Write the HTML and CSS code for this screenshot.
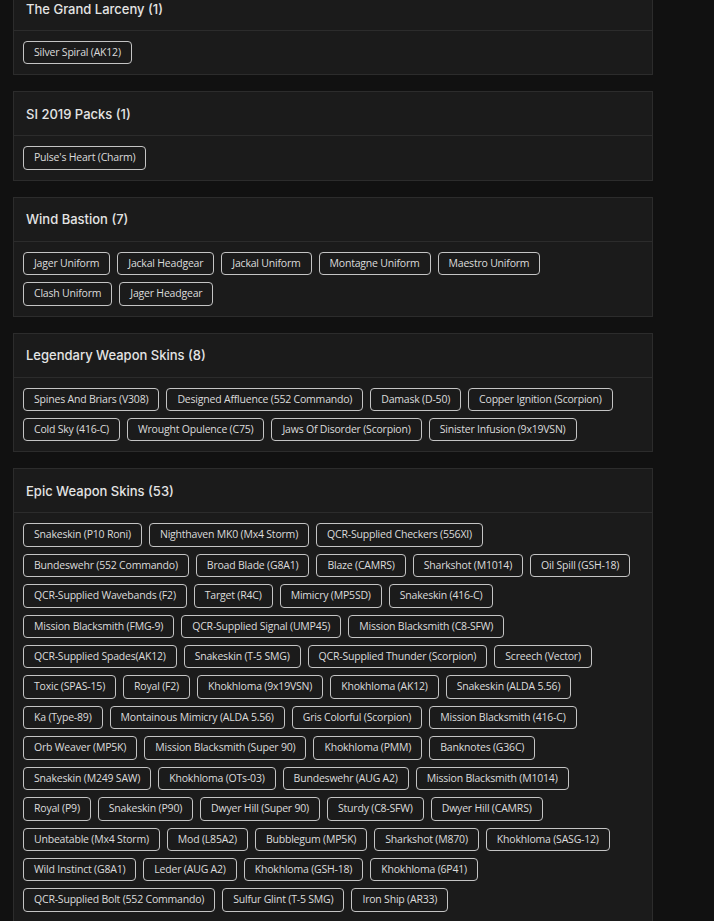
FILE: index.html
```html
<!DOCTYPE html>
<html lang="en">
<head>
<meta charset="utf-8">
<title>Skins</title>
<link rel="stylesheet" href="styles.css">
</head>
<body>
<main class="list">
  <section class="card">
    <h2 class="card-head">The Grand Larceny (1)</h2>
    <div class="card-body">
      <span class="tag">Silver Spiral (AK12)</span>
    </div>
  </section>
  <section class="card">
    <h2 class="card-head">SI 2019 Packs (1)</h2>
    <div class="card-body">
      <span class="tag">Pulse's Heart (Charm)</span>
    </div>
  </section>
  <section class="card">
    <h2 class="card-head">Wind Bastion (7)</h2>
    <div class="card-body">
      <span class="tag">Jager Uniform</span>
      <span class="tag">Jackal Headgear</span>
      <span class="tag">Jackal Uniform</span>
      <span class="tag">Montagne Uniform</span>
      <span class="tag">Maestro Uniform</span>
      <span class="tag">Clash Uniform</span>
      <span class="tag">Jager Headgear</span>
    </div>
  </section>
  <section class="card">
    <h2 class="card-head">Legendary Weapon Skins (8)</h2>
    <div class="card-body">
      <span class="tag">Spines And Briars (V308)</span>
      <span class="tag">Designed Affluence (552 Commando)</span>
      <span class="tag">Damask (D-50)</span>
      <span class="tag">Copper Ignition (Scorpion)</span>
      <span class="tag">Cold Sky (416-C)</span>
      <span class="tag">Wrought Opulence (C75)</span>
      <span class="tag">Jaws Of Disorder (Scorpion)</span>
      <span class="tag">Sinister Infusion (9x19VSN)</span>
    </div>
  </section>
  <section class="card">
    <h2 class="card-head">Epic Weapon Skins (53)</h2>
    <div class="card-body">
      <span class="tag">Snakeskin (P10 Roni)</span>
      <span class="tag">Nighthaven MK0 (Mx4 Storm)</span>
      <span class="tag">QCR-Supplied Checkers (556XI)</span>
      <span class="tag">Bundeswehr (552 Commando)</span>
      <span class="tag">Broad Blade (G8A1)</span>
      <span class="tag">Blaze (CAMRS)</span>
      <span class="tag">Sharkshot (M1014)</span>
      <span class="tag">Oil Spill (GSH-18)</span>
      <span class="tag">QCR-Supplied Wavebands (F2)</span>
      <span class="tag">Target (R4C)</span>
      <span class="tag">Mimicry (MP5SD)</span>
      <span class="tag">Snakeskin (416-C)</span>
      <span class="tag">Mission Blacksmith (FMG-9)</span>
      <span class="tag">QCR-Supplied Signal (UMP45)</span>
      <span class="tag">Mission Blacksmith (C8-SFW)</span>
      <span class="tag">QCR-Supplied Spades(AK12)</span>
      <span class="tag">Snakeskin (T-5 SMG)</span>
      <span class="tag">QCR-Supplied Thunder (Scorpion)</span>
      <span class="tag">Screech (Vector)</span>
      <span class="tag">Toxic (SPAS-15)</span>
      <span class="tag">Royal (F2)</span>
      <span class="tag">Khokhloma (9x19VSN)</span>
      <span class="tag">Khokhloma (AK12)</span>
      <span class="tag">Snakeskin (ALDA 5.56)</span>
      <span class="tag">Ka (Type-89)</span>
      <span class="tag">Montainous Mimicry (ALDA 5.56)</span>
      <span class="tag">Gris Colorful (Scorpion)</span>
      <span class="tag">Mission Blacksmith (416-C)</span>
      <span class="tag">Orb Weaver (MP5K)</span>
      <span class="tag">Mission Blacksmith (Super 90)</span>
      <span class="tag">Khokhloma (PMM)</span>
      <span class="tag">Banknotes (G36C)</span>
      <span class="tag">Snakeskin (M249 SAW)</span>
      <span class="tag">Khokhloma (OTs-03)</span>
      <span class="tag">Bundeswehr (AUG A2)</span>
      <span class="tag">Mission Blacksmith (M1014)</span>
      <span class="tag">Royal (P9)</span>
      <span class="tag">Snakeskin (P90)</span>
      <span class="tag">Dwyer Hill (Super 90)</span>
      <span class="tag">Sturdy (C8-SFW)</span>
      <span class="tag">Dwyer Hill (CAMRS)</span>
      <span class="tag">Unbeatable (Mx4 Storm)</span>
      <span class="tag">Mod (L85A2)</span>
      <span class="tag">Bubblegum (MP5K)</span>
      <span class="tag">Sharkshot (M870)</span>
      <span class="tag">Khokhloma (SASG-12)</span>
      <span class="tag">Wild Instinct (G8A1)</span>
      <span class="tag">Leder (AUG A2)</span>
      <span class="tag">Khokhloma (GSH-18)</span>
      <span class="tag">Khokhloma (6P41)</span>
      <span class="tag">QCR-Supplied Bolt (552 Commando)</span>
      <span class="tag">Sulfur Glint (T-5 SMG)</span>
      <span class="tag">Iron Ship (AR33)</span>
    </div>
  </section>
</main>
</body>
</html>
```

FILE: styles.css
```css
html, body {
  margin: 0;
  padding: 0;
  background: #111111;
}

body {
  font-family: "Open Sans", "DejaVu Sans", sans-serif;
  color: #dedede;
  overflow: hidden;
}

.list {
  width: 640px;
  margin: -14px 0 0 13px;
  display: flex;
  flex-direction: column;
  gap: 16px;
}

.card {
  background: #1b1b1b;
  border: 1px solid #2c2c2c;
}

.card-head {
  margin: 0;
  height: 43px;
  display: flex;
  align-items: center;
  padding: 0 12px;
  border-bottom: 1px solid #2c2c2c;
  font-family: Inter, "DejaVu Sans", sans-serif;
  font-size: 13px;
  font-weight: 500;
  color: #e4e4e4;
}

.card-body {
  display: flex;
  flex-wrap: wrap;
  gap: 7px;
  padding: 10px 19px 10px 9px;
}

.tag {
  display: inline-block;
  padding: 4px 10px;
  line-height: 13.4px;
  font-size: 10.5px;
  font-weight: 500;
  letter-spacing: -0.2px;
  color: #dcdcdc;
  border: 1px solid #c4c4c4;
  border-radius: 4px;
  white-space: nowrap;
}
```
